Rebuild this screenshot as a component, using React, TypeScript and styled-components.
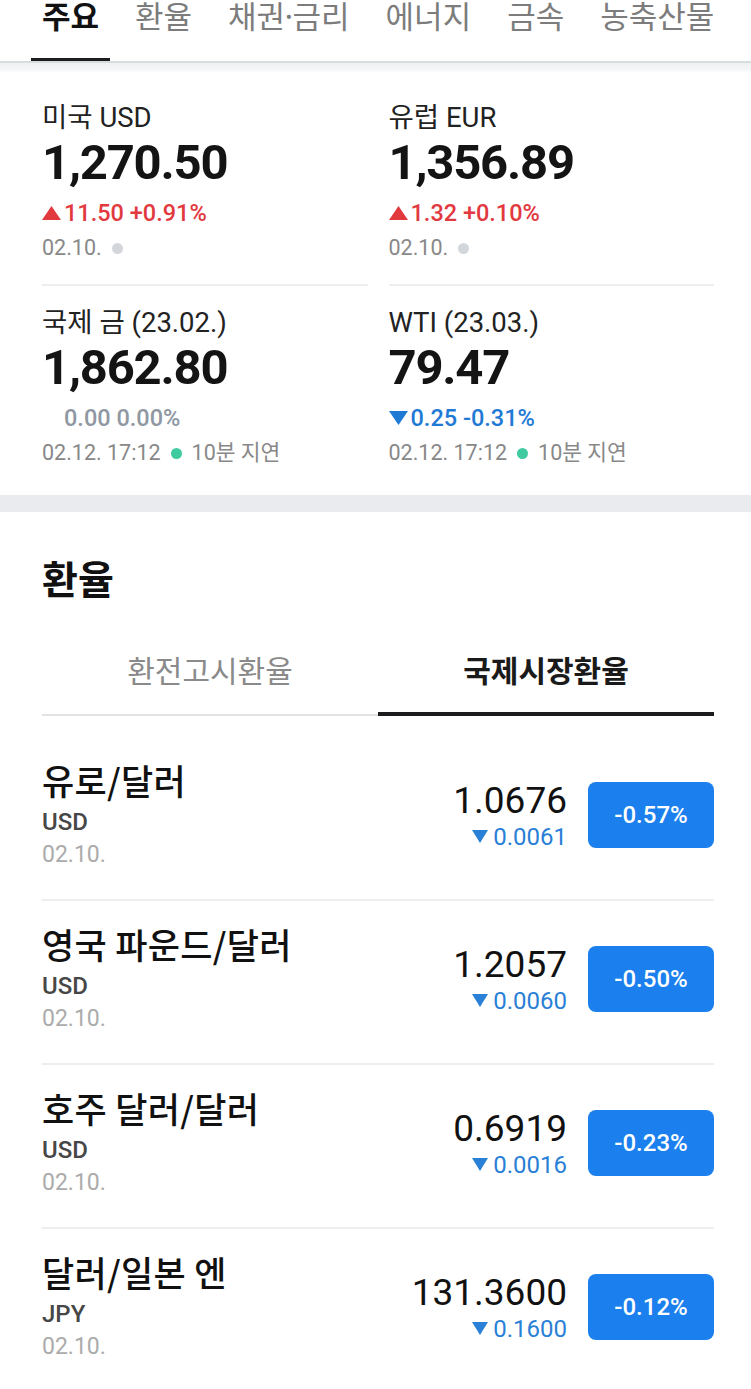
import React from "react";
import styled, { createGlobalStyle } from "styled-components";

const KR = `"Noto Sans CJK KR", Roboto, sans-serif`;
const NUM = `Roboto, "Noto Sans CJK KR", sans-serif`;

const GlobalStyle = createGlobalStyle`
  html, body { margin: 0; padding: 0; background: #ffffff; }
  body { font-family: ${NUM}; -webkit-font-smoothing: antialiased; }
  * { box-sizing: border-box; }
`;

type Tone = "up" | "down" | "flat";
const toneColor: Record<Tone, string> = {
  up: "#e2393f",
  down: "#1f7ad6",
  flat: "#8f98a3",
};

const Page = styled.div`
  width: 751px;
  height: 1389px;
  overflow: hidden;
  background: #fff;
`;

/* ---------- top category tabs ---------- */
const TabBar = styled.nav`
  display: flex;
  gap: 14px;
  padding-left: 31px;
  border-bottom: 2px solid #d7dddd;
  white-space: nowrap;
  overflow: hidden;
`;

const Tab = styled.div<{ $active?: boolean }>`
  flex-shrink: 0;
  font-family: ${KR};
  font-size: 31px;
  line-height: 30px;
  padding: 0 11px 28px;
  margin-bottom: -2px;
  border-bottom: 5px solid ${(p) => (p.$active ? "#1c1c1e" : "transparent")};
  color: ${(p) => (p.$active ? "#111" : "#7c7c7c")};
  font-weight: ${(p) => (p.$active ? 700 : 400)};
`;

const MidDot = styled.span`
  letter-spacing: -10px;
  margin-left: -5px;
  padding-right: 5px;
`;

/* ---------- summary cards ---------- */
const CardGrid = styled.section`
  display: grid;
  grid-template-columns: 1fr 1fr;
  column-gap: 21px;
  padding: 18px 37px 4px 42px;
  background: linear-gradient(
    to bottom,
    #eef1f3 0px,
    #f4f6f7 7px,
    #ffffff 10px
  );
`;

const Card = styled.div<{ $divider?: boolean }>`
  padding: 20px 0 23px;
  border-bottom: ${(p) => (p.$divider ? "2px solid #eeeeee" : "2px solid transparent")};
`;

const CardLabel = styled.div`
  font-size: 27.5px;
  line-height: 34px;
  color: #222;
`;

const CardValue = styled.div`
  font-size: 49px;
  line-height: 56px;
  font-weight: 700;
  letter-spacing: -1.2px;
  color: #141414;
`;

const Change = styled.div<{ $tone: Tone }>`
  display: flex;
  align-items: center;
  margin-top: 8px;
  font-size: 23.5px;
  line-height: 28px;
  font-weight: 500;
  color: ${(p) => toneColor[p.$tone]};
`;

const TriSlot = styled.span`
  display: inline-flex;
  width: 19px;
  height: 14px;
  margin-right: 3px;
  flex-shrink: 0;
`;

const CardDate = styled.div`
  display: flex;
  align-items: center;
  margin-top: 8px;
  font-size: 21.5px;
  line-height: 26px;
  color: #888;
`;

const Dot = styled.span<{ $live?: boolean }>`
  width: 11px;
  height: 11px;
  border-radius: 50%;
  margin: 0 10px 0 10px;
  background: ${(p) => (p.$live ? "#3fcaa0" : "#d3d7dc")};
`;

const DelayText = styled.span`
  font-family: ${NUM};
`;

/* ---------- section gap ---------- */
const SectionGap = styled.div`
  height: 17px;
  background: #e9ebee;
`;

/* ---------- exchange rate list ---------- */
const RateSection = styled.section`
  padding: 41px 37px 0 42px;
`;

const Heading = styled.h2`
  margin: 0;
  font-family: ${KR};
  font-size: 39px;
  line-height: 48px;
  font-weight: 700;
  color: #111;
`;

const SubTabs = styled.div`
  display: grid;
  grid-template-columns: 1fr 1fr;
  margin-top: 48px;
  border-bottom: 2px solid #e3e3e3;
`;

const SubTab = styled.div<{ $active?: boolean }>`
  text-align: center;
  font-family: ${KR};
  font-size: 30px;
  line-height: 40px;
  padding-bottom: 23px;
  margin-bottom: -2px;
  border-bottom: 4px solid ${(p) => (p.$active ? "#1c1c1e" : "transparent")};
  color: ${(p) => (p.$active ? "#1a1a1a" : "#8a8a8a")};
  font-weight: ${(p) => (p.$active ? 700 : 400)};
`;

const RateList = styled.div`
  padding-top: 21px;
`;

const RateRow = styled.div`
  display: flex;
  align-items: center;
  padding: 22px 0 29px;
  border-bottom: 2px solid #eeeeee;
`;

const RateInfo = styled.div`
  flex: 1;
  display: flex;
  flex-direction: column;
`;

const RateName = styled.div`
  font-family: ${KR};
  font-size: 35px;
  line-height: 42px;
  font-weight: 500;
  letter-spacing: 0.3px;
  color: #111;
`;

const RateCurrency = styled.div`
  margin-top: 6px;
  font-size: 24px;
  line-height: 30px;
  font-weight: 500;
  color: #474747;
`;

const RateDate = styled.div`
  margin-top: 3px;
  font-size: 23px;
  line-height: 30px;
  color: #ababab;
`;

const Quote = styled.div`
  display: flex;
  flex-direction: column;
  align-items: flex-end;
`;

const Price = styled.div`
  font-size: 37px;
  line-height: 44px;
  color: #111;
`;

const Delta = styled.div`
  display: flex;
  align-items: center;
  font-size: 24px;
  line-height: 28px;
  color: #2a7fd6;
`;

const SmallTri = styled.span`
  display: inline-flex;
  width: 16px;
  height: 13px;
  margin-right: 5px;
`;

const Badge = styled.div`
  width: 126px;
  height: 66px;
  margin-left: 21px;
  border-radius: 8px;
  background: #1b80ee;
  color: #fff;
  font-size: 24px;
  font-weight: 500;
  display: flex;
  align-items: center;
  justify-content: center;
`;

/* ---------- icons ---------- */
const Triangle = ({ dir, color }: { dir: "up" | "down"; color: string }) => (
  <svg width="100%" height="100%" viewBox="0 0 20 14" preserveAspectRatio="none">
    {dir === "up" ? (
      <polygon points="10,0 20,14 0,14" fill={color} />
    ) : (
      <polygon points="0,0 20,0 10,14" fill={color} />
    )}
  </svg>
);

/* ---------- data ---------- */
type CardData = {
  label: string;
  value: string;
  tone: Tone;
  change: string;
  date: string;
  live?: boolean;
};

const cards: CardData[] = [
  { label: "미국 USD", value: "1,270.50", tone: "up", change: "11.50 +0.91%", date: "02.10." },
  { label: "유럽 EUR", value: "1,356.89", tone: "up", change: "1.32 +0.10%", date: "02.10." },
  { label: "국제 금 (23.02.)", value: "1,862.80", tone: "flat", change: "0.00 0.00%", date: "02.12. 17:12", live: true },
  { label: "WTI (23.03.)", value: "79.47", tone: "down", change: "0.25 -0.31%", date: "02.12. 17:12", live: true },
];

const rates = [
  { name: "유로/달러", cur: "USD", date: "02.10.", price: "1.0676", delta: "0.0061", pct: "-0.57%" },
  { name: "영국 파운드/달러", cur: "USD", date: "02.10.", price: "1.2057", delta: "0.0060", pct: "-0.50%" },
  { name: "호주 달러/달러", cur: "USD", date: "02.10.", price: "0.6919", delta: "0.0016", pct: "-0.23%" },
  { name: "달러/일본 엔", cur: "JPY", date: "02.10.", price: "131.3600", delta: "0.1600", pct: "-0.12%" },
];

const tabs = ["주요", "환율", "채권·금리", "에너지", "금속", "농축산물"];

const renderTabLabel = (t: string) => {
  const parts = t.split("·");
  if (parts.length === 1) return t;
  return (
    <>
      {parts[0]}
      <MidDot>·</MidDot>
      {parts[1]}
    </>
  );
};

export default function App() {
  return (
    <Page>
      <GlobalStyle />
      <TabBar>
        {tabs.map((t, i) => (
          <Tab key={t} $active={i === 0}>
            {renderTabLabel(t)}
          </Tab>
        ))}
      </TabBar>

      <CardGrid>
        {cards.map((c, i) => (
          <Card key={c.label} $divider={i < 2}>
            <CardLabel>{c.label}</CardLabel>
            <CardValue>{c.value}</CardValue>
            <Change $tone={c.tone}>
              <TriSlot>
                {c.tone !== "flat" && <Triangle dir={c.tone === "up" ? "up" : "down"} color={toneColor[c.tone]} />}
              </TriSlot>
              {c.change}
            </Change>
            <CardDate>
              {c.date}
              <Dot $live={c.live} />
              {c.live && <DelayText>10분 지연</DelayText>}
            </CardDate>
          </Card>
        ))}
      </CardGrid>

      <SectionGap />

      <RateSection>
        <Heading>환율</Heading>
        <SubTabs>
          <SubTab>환전고시환율</SubTab>
          <SubTab $active>국제시장환율</SubTab>
        </SubTabs>
        <RateList>
          {rates.map((r) => (
            <RateRow key={r.name}>
              <RateInfo>
                <RateName>{r.name}</RateName>
                <RateCurrency>{r.cur}</RateCurrency>
                <RateDate>{r.date}</RateDate>
              </RateInfo>
              <Quote>
                <Price>{r.price}</Price>
                <Delta>
                  <SmallTri>
                    <Triangle dir="down" color="#2a7fd6" />
                  </SmallTri>
                  {r.delta}
                </Delta>
              </Quote>
              <Badge>{r.pct}</Badge>
            </RateRow>
          ))}
        </RateList>
      </RateSection>
    </Page>
  );
}
